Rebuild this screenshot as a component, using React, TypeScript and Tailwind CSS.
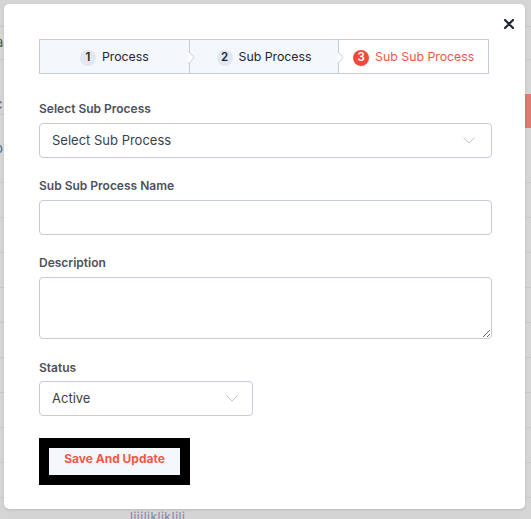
import React from "react";

const steps = [
  { n: 1, label: "Process", active: false },
  { n: 2, label: "Sub Process", active: false },
  { n: 3, label: "Sub Sub Process", active: true },
];

function Chevron() {
  return (
    <svg className="absolute -right-[6px] top-[11px] z-10" width="7" height="13" viewBox="0 0 7 13">
      <path d="M0.5 0.5 L6 6.5 L0.5 12.5" fill="#fff" stroke="#c8ced9" strokeWidth="1" />
    </svg>
  );
}

function Stepper() {
  return (
    <div className="flex h-[35px] w-[450px] border border-[#c6cdd9]">
      {steps.map((s, i) => (
        <div
          key={s.n}
          className={`relative flex flex-1 items-center justify-center gap-[6px] pt-[2px] text-[12.3px] ${
            i < 2 ? "border-r border-[#c6cdd9] bg-[#f4f7fc]" : "bg-white"
          }`}
        >
          <span
            className={`flex h-4 w-4 items-center justify-center rounded-full text-[11.5px] font-semibold ${
              s.active ? "bg-[#f14a3a] text-white" : "bg-[#e2e8f1] text-[#1f2533]"
            }`}
          >
            {s.n}
          </span>
          <span className={s.active ? "text-[#f5564a]" : "text-[#1f2533]"}>{s.label}</span>
          {i < 2 && <Chevron />}
        </div>
      ))}
    </div>
  );
}

function Caret() {
  return (
    <svg width="12" height="7" viewBox="0 0 12 7">
      <path d="M0.5 0.5 L6 6 L11.5 0.5" fill="none" stroke="#c0c4cc" strokeWidth="1" />
    </svg>
  );
}

function Label({ children }: { children: React.ReactNode }) {
  return <div className="h-4 pt-[1px] text-[12px] font-semibold leading-4 text-[#4d5159]">{children}</div>;
}

export default function App() {
  return (
    <div
      className="relative h-[519px] w-[531px] overflow-hidden bg-[#d5d5d5]"
      style={{ fontFamily: "Inter, 'Noto Sans', sans-serif" }}
    >
      {/* page behind the overlay */}
      <div className="flex flex-col">
        <div className="h-[27px] border-b border-[#c9c9c9]" />
        <div className="flex h-[33px] items-center border-b border-[#c9c9c9] text-[13px] text-[#555]">
          <span className="-ml-[4px]">a</span>
        </div>
        <div className="flex h-[55px] items-end border-b border-[#c9c9c9] text-[13px] text-[#555]">
          <span className="-ml-[5px]">c</span>
        </div>
        <div className="flex h-[68px] items-center border-b border-[#c9c9c9] text-[13px] text-[#3b6b9a]">
          <span className="-ml-[5px]">o</span>
        </div>
        {Array.from({ length: 9 }).map((_, i) => (
          <div key={i} className="h-[35px] border-b border-[#c9c9c9]" />
        ))}
      </div>
      <div className="absolute right-0 top-[94px] h-[34px] w-[6px] bg-[#dd7b72]" />
      <div className="absolute left-[130px] top-[508px] text-[12px] tracking-[0.5px] text-[#8a80a6]">liiiliklikIili</div>

      {/* modal */}
      <div className="absolute left-[4px] top-[4px] h-[505px] w-[521px] rounded-[5px] bg-white pl-[35px] pt-[35px] shadow-sm">
        <button className="absolute right-[11px] top-[15px] p-0">
          <svg width="10" height="10" viewBox="0 0 10 10">
            <path d="M1 1 L9 9 M9 1 L1 9" stroke="#1f2533" strokeWidth="2.2" strokeLinecap="round" />
          </svg>
        </button>

        <Stepper />

        <div className="mt-[26px]">
          <Label>Select Sub Process</Label>
          <div className="mt-[7px] flex h-[35px] w-[453px] items-center justify-between rounded-[4px] border border-[#c6cdd9] pl-[12px] pr-[16px] text-[13px] text-[#3a3f48]">
            <span>Select Sub Process</span>
            <Caret />
          </div>
        </div>

        <div className="mt-[19px]">
          <Label>Sub Sub Process Name</Label>
          <input className="mt-[7px] block h-[35px] w-[453px] rounded-[4px] border border-[#c6cdd9] px-3 text-[13px] outline-none" />
        </div>

        <div className="mt-[19px]">
          <Label>Description</Label>
          <textarea className="mt-[7px] block h-[62px] w-[453px] rounded-[4px] border border-[#c6cdd9] px-3 text-[13px] outline-none" />
        </div>

        <div className="mt-[20px]">
          <Label>Status</Label>
          <div className="mt-[6px] flex h-[35px] w-[214px] items-center justify-between rounded-[4px] border border-[#c6cdd9] pl-[12px] pr-[14px] text-[13px] text-[#3a3f48]">
            <span>Active</span>
            <Caret />
          </div>
        </div>

        <div className="mt-[22px] w-[151px] border-[10px] border-black">
          <button className="flex h-[27px] w-full items-start justify-center bg-[#f4f7fc] pt-[3px] text-[12px] font-bold leading-[15px] text-[#f4574a]">
            Save And Update
          </button>
        </div>
      </div>
    </div>
  );
}
